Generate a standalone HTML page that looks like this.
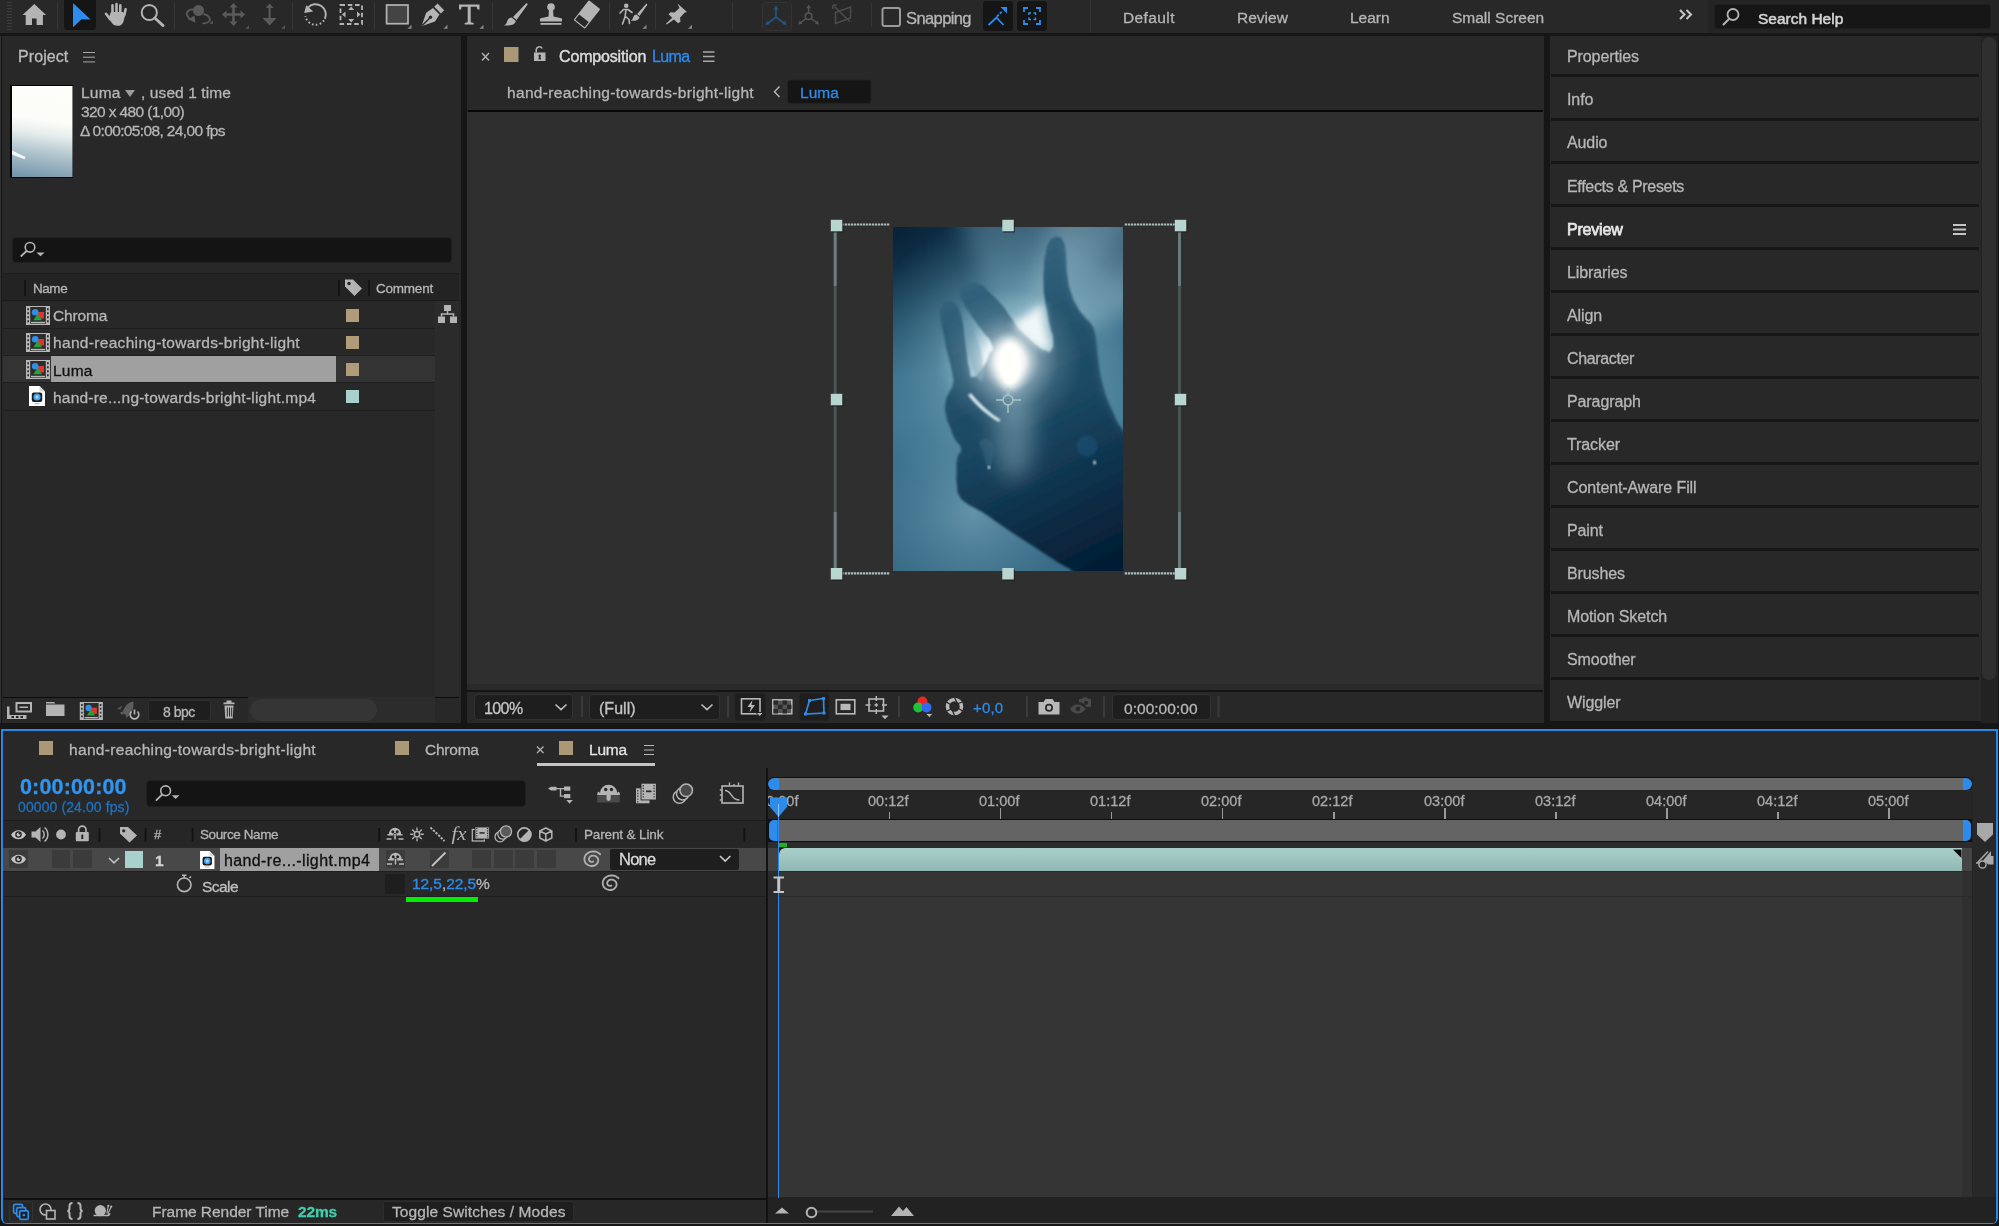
<!DOCTYPE html>
<html lang="en">
<head>
<meta charset="utf-8">
<title>After Effects - Luma</title>
<style>
*{box-sizing:border-box;margin:0;padding:0}
html,body{width:1999px;height:1226px;overflow:hidden;background:#161616}
body{position:relative;font-family:"Liberation Sans",sans-serif;color:#b6b6b6;font-size:15px}
.a{position:absolute}
.t{position:absolute;white-space:nowrap;line-height:20px;height:20px;color:#b6b6b6;font-size:15px;-webkit-text-stroke:.300px;will-change:transform;margin-top:1px}
.p{position:absolute;background:#282828}
.blue{color:#2d8ceb}
svg{position:absolute;overflow:visible}
</style>
</head>
<body>
<!-- TOOLBAR -->
<div class="p" id="toolbar" style="left:0;top:0;width:1999px;height:33px"></div>
<!--TB-->
<svg id="tbsvg" style="left:0;top:0" width="1999" height="33" viewBox="0 0 1999 33">
<g fill="none" stroke="#3b3b3b" stroke-width="1">
<path d="M7 2.5h5M7 5.5h5M7 8.5h5M7 11.5h5M7 14.5h5M7 17.5h5M7 20.5h5M7 23.5h5M7 26.5h5M7 29.5h5" stroke="#3d3d3d"/>
<path d="M57.5 2v28M174.5 2v28M292.5 2v28M374.5 2v28M492.5 2v28M609.5 2v28M655.5 2v28M732.5 2v28M871.5 3v24M1090.5 0v33" stroke="#353535"/>
</g>
<!-- home -->
<path fill="#b4b4b4" d="M34.3 4 22.5 15h3.2v10h6.3v-6.5h4.6V25h6.3V15h3.2z"/>
<!-- selection tool -->
<rect x="64" y="-2" width="32" height="32" rx="4" fill="#151515"/>
<path fill="#2d8ceb" d="M73 3 90.6 19.4 81.6 19.3 73 27.2z"/>
<!-- hand -->
<g fill="none" stroke="#b4b4b4" stroke-width="2.6" stroke-linecap="round">
<path d="M112.5 13.5V5.2M116.5 12.5V4M120.3 13V5.4M124.2 15.5l1.4-6.3"/>
<path d="M106 13.8l4.2 5.5"/>
</g>
<path fill="#b4b4b4" d="M111 12h11.5l2.8 2-1.5 6.5c-.6 3-2.6 5.3-6 5.300-3.300 0-5-1.300-6.300-3.300L108.500 18z"/>
<!-- zoom -->
<circle cx="149.300" cy="12.500" r="7.600" fill="none" stroke="#b4b4b4" stroke-width="2"/>
<path d="M154.800 18l8.300 7.600" stroke="#b4b4b4" stroke-width="2.800" stroke-linecap="round"/>
<!-- orbit (dim) -->
<g fill="#5a5a5a" stroke="none">
<circle cx="198.500" cy="10.500" r="5.500"/>
<path d="M188 19.200l7.500 3.500-1-7.200z"/>
<path d="M209.500 23.800 213 20.300v3.500zM245.500 28.800 249 25.300v3.500zM281.500 28.800 285 25.300v3.500z" />
</g>
<path d="M194 9.500c-5-1-8.500 2.500-6.500 6.500l2 3M203.500 14c5 1 8 4.500 5.500 7.500-1.500 1.600-4 2-6.500 1.800" fill="none" stroke="#5a5a5a" stroke-width="1.800"/>
<!-- pan 4-arrows (dim) -->
<g fill="#5a5a5a">
<path d="M232.200 6h2.600v17h-2.600zM225 13.200h17v2.600h-17z"/>
<path d="M233.500 3l4 4.500h-8zM233.500 26l4-4.500h-8zM222 14.500l4.500-4v8zM245 14.500l-4.500-4v8z"/>
<!-- dolly -->
<path d="M268.600 7h2v14h-2z"/>
<path d="M269.600 3.500l4 4.500h-8zM269.600 25.500l7-7.500h-14z"/>
</g>
<!-- rotate -->
<path d="M308.200 7.300A10.300 10.300 0 0 1 324.900 18.800" fill="none" stroke="#b4b4b4" stroke-width="1.900"/>
<path d="M306.300 5.300l6.900 6.200-9 1.600z" fill="#b4b4b4"/>
<path d="M324 20.400A10.300 10.300 0 0 1 305.400 16" fill="none" stroke="#b4b4b4" stroke-width="1.900" stroke-dasharray="1.700 2.200"/>
<!-- pan behind -->
<rect x="340.500" y="5" width="21.500" height="19" fill="none" stroke="#b4b4b4" stroke-width="1.800" stroke-dasharray="4.500 2.800"/>
<path fill="#b4b4b4" d="M351.200 6.500l3 3.500h-6zM351.200 22.500l3-3.500h-6zM342 14.500l3.500-3v6zM360.500 14.500l-3.500-3v6z"/>
<!-- rectangle -->
<rect x="386.600" y="5" width="21.400" height="18.700" fill="#444" stroke="#b4b4b4" stroke-width="1.700"/>
<g fill="#8a8a8a"><path d="M407.500 28.800 411.500 24.800v4zM443.500 28.800 447.500 24.800v4zM479.500 28.800 483.500 24.800v4zM642.500 28.800 646.500 24.800v4zM688 28.800 692 24.800v4z"/></g>
<!-- pen -->
<g fill="#b4b4b4">
<path d="M437.500 3.500l6.700 6.700-3.300 3.300-6.700-6.700z"/>
<path d="M433 8l6.500 6.500-4.500 7-13.500 4.700 4.700-13.500z"/>
</g>
<path d="M422 25.800l7.500-7.500" stroke="#282828" stroke-width="1.400"/>
<circle cx="430.500" cy="17.300" r="1.700" fill="#282828"/>
<!-- T -->
<path fill="#b4b4b4" d="M459 4.500h20.500v5h-2l-.8-2.700h-6v15.500l3 .7v1.500h-9v-1.500l3-.7V6.800h-6l-.8 2.700h-1.900z"/>
<!-- brush -->
<path fill="#b4b4b4" d="M526 3.500c1.200-.6 2 .3 1.300 1.500L516.500 20l-3.500-3z"/>
<path fill="#b4b4b4" d="M511.800 17.500l4 3.500c-.5 3.300-4.500 5-12 4.500 2.500-1 2.800-2.500 3.500-4.500.8-2.300 2.500-3.500 4.500-3.500z"/>
<!-- stamp -->
<g fill="#b4b4b4"><circle cx="551" cy="7" r="3.800"/><path d="M549 9h4l.5 7.500 5.500 1.200 3 .8v3h-22v-3l3-.8 5.500-1.200z"/><rect x="540.500" y="23" width="21" height="1.800"/></g>
<!-- eraser -->
<g transform="rotate(-52 587 14)"><rect x="574" y="7" width="25" height="14.500" rx="1" fill="#b4b4b4"/><rect x="575.200" y="8.200" width="6.500" height="12.100" fill="#282828"/></g>
<!-- roto brush -->
<g fill="#b4b4b4"><circle cx="626.200" cy="5.800" r="2.300"/>
<path d="M646 4c.8-.5 1.600.3 1 1.200L639.500 16l-2.300-2z"/>
<path d="M636.500 14.500l3 2.700c-.5 2.800-3.800 4-9 3.500 2-.8 2.200-2 2.700-3.500.6-1.800 1.800-2.700 3.300-2.700z"/></g>
<path d="M620 13l3.500-3.500h4.500l4 3M626 10l-1 7-2.500 7M625.500 16.500l3.500 3 .5 4" fill="none" stroke="#b4b4b4" stroke-width="1.600" stroke-linecap="round" stroke-linejoin="round"/>
<!-- pin -->
<g fill="#b4b4b4"><path d="M677.500 3.500l9.500 8.500-2.500.8-4.500 5 .5 4-2.500 1.500-9.500-9 2-2 4 .3 5-4.500z"/><path d="M672.500 17.500l1.800 1.800-7.500 5.200-.8-.8z"/></g>
<!-- 3d axis modes -->
<rect x="762.500" y="2.500" width="29" height="28" rx="3" fill="#2a2a2a" stroke="#333" />
<g stroke="#25568a" stroke-width="1.600" fill="#25568a"><path d="M776 17V8M776 17l-8.500 6.500M776 17l8.500 6.500" fill="none"/><path d="M776 5.500l2.500 4h-5zM765.500 25l1.500-4.300 2.800 3.600zM786.500 25l-1.500-4.300-2.800 3.600z" stroke="none"/></g>
<g stroke="#555" stroke-width="1.500" fill="#555"><circle cx="808.600" cy="16.300" r="3.300" fill="none"/><path d="M808.600 13V7M806 18.500l-6 4.500M811.200 18.500l6 4.500" fill="none"/><path d="M808.600 4.500l2.300 3.800h-4.600zM798.300 24.500l1.300-4 2.700 3.300zM819 24.500l-1.300-4-2.700 3.300z" stroke="none"/></g>
<g stroke="#4c4c4c" stroke-width="1.500" fill="none"><path d="M835.500 12.500l15-5.500v11l-15 5.500z"/><path d="M843 15l-8.500-8.500M843 15l7 6.500M832.800 5v4M832.800 5h4"/></g>
<!-- snapping -->
<rect x="882.500" y="8" width="17.500" height="18" rx="2" fill="none" stroke="#9a9a9a" stroke-width="2"/>
<rect x="983" y="1" width="30" height="30" rx="3" fill="#151515"/>
<rect x="1017" y="1" width="30" height="30" rx="3" fill="#151515"/>
<path d="M988.500 25l8-7.500 7 7.500" fill="none" stroke="#2d8ceb" stroke-width="1.800"/>
<path d="M997 16.500l5.500-5.500" fill="none" stroke="#2d8ceb" stroke-width="1.800" stroke-dasharray="2.500 1.500"/>
<path d="M1000.500 7h6.500v6.500z" fill="#2d8ceb"/>
<g fill="none" stroke="#2d8ceb" stroke-width="1.800"><path d="M1024 12V8h4M1036 8h4v4M1040 20v4h-4M1028 24h-4v-4"/><path d="M1029 15v-2h2M1033.500 13h2v2M1035.500 17.500v2h-2M1031 19.500h-2v-2" stroke-width="1.500"/></g>
<!-- chevrons -->
<path d="M1680 10l4.500 4.500-4.500 4.500M1686.500 10l4.500 4.500-4.500 4.500" fill="none" stroke="#c8c8c8" stroke-width="2"/>
<!-- search box -->
<rect x="1708" y="0" width="291" height="33" fill="#242424"/>
<rect x="1714.500" y="4.500" width="276" height="24" rx="3" fill="#161616" stroke="#1e1e1e"/>
<circle cx="1733" cy="14.500" r="5.500" fill="none" stroke="#b4b4b4" stroke-width="1.800"/>
<path d="M1729 19l-5.500 5.500" stroke="#b4b4b4" stroke-width="2" stroke-linecap="round"/>
</svg>
<div class="t" style="left:905.500px;top:7px;font-size:16.500px;letter-spacing:-.600px">Snapping</div>
<div class="t" style="left:1123px;top:7px;font-size:15.500px;letter-spacing:.400px">Default</div>
<div class="t" style="left:1237px;top:7px;font-size:15.500px">Review</div>
<div class="t" style="left:1350px;top:7px;font-size:15.500px">Learn</div>
<div class="t" style="left:1452px;top:7px;font-size:15.500px">Small Screen</div>
<div class="t" style="left:1758px;top:8px;font-size:15.500px;color:#d4d4d4;-webkit-text-stroke:.550px">Search Help</div>
<!--/TB-->
<!-- PROJECT PANEL -->
<div class="p" id="project" style="left:2px;top:36px;width:459px;height:687px"></div>
<!--PJ-->
<svg width="0" height="0" style="left:0;top:0"><defs>
<linearGradient id="thg" x1="0.100" y1="0" x2="0" y2="1"><stop offset="0" stop-color="#fdfdf9"/><stop offset=".330" stop-color="#fcfdf9"/><stop offset=".480" stop-color="#e6edec"/><stop offset=".700" stop-color="#aec3cc"/><stop offset="1" stop-color="#7193a8"/></linearGradient>
</defs></svg>
<div class="a" style="left:0;top:36px;width:1.400px;height:687px;background:#323232"></div>
<div class="t" style="left:17.800px;top:46px;font-size:16px;letter-spacing:.080px;color:#bcbcbc">Project</div>
<div class="a" style="left:83px;top:51.500px;width:12px;height:1.500px;background:#a8a8a8;box-shadow:0 4.700px 0 #a8a8a8,0 9.400px 0 #a8a8a8"></div>
<!-- thumbnail -->
<div class="a" style="left:10px;top:85px;width:63px;height:93px;background:#050505"></div>
<svg style="left:11.500px;top:86px" width="60.500" height="91" viewBox="0 0 60.500 91"><rect width="60.500" height="91" fill="url(#thg)"/><path d="M0 64.500l13.500 6.500-1 2.300L0 68.500z" fill="#f4f7f6"/></svg>
<div class="t" style="left:80.500px;top:82px;font-size:15.500px;letter-spacing:.200px">Luma</div>
<div class="a" style="left:125px;top:89.500px;width:0;height:0;border-left:5px solid transparent;border-right:5px solid transparent;border-top:7px solid #9c9c9c"></div>
<div class="t" style="left:140.500px;top:82px;font-size:15.500px;letter-spacing:.100px">, used 1 time</div>
<div class="t" style="left:80.500px;top:100.800px;font-size:15.500px;letter-spacing:-.620px">320 x 480 (1,00)</div>
<div class="t" style="left:80px;top:119.600px;font-size:15.500px;letter-spacing:-.630px">Δ 0:00:05:08, 24,00 fps</div>
<!-- search -->
<div class="a" style="left:11.500px;top:236.500px;width:440px;height:26px;background:#141414;border:1px solid #202020;border-radius:4px"></div>
<svg style="left:18px;top:239px" width="30" height="20" viewBox="18 239 30 20"><circle cx="30" cy="247.300" r="4.800" fill="none" stroke="#b4b4b4" stroke-width="1.600"/><path d="M26.600 251l-5.300 5" stroke="#b4b4b4" stroke-width="1.800" stroke-linecap="round"/><path d="M36.500 252.500h8l-4 3.800z" fill="#b4b4b4"/></svg>
<!-- list header -->
<div class="a" style="left:3px;top:273px;width:456px;height:28px;background:#232323;border-top:1px solid #1d1d1d;border-bottom:1px solid #1b1b1b"></div>
<div class="a" style="left:435px;top:301px;width:24px;height:397px;background:#2b2b2b"></div>
<div class="a" style="left:24px;top:280px;width:2px;height:16px;background:#141414"></div>
<div class="a" style="left:338px;top:280px;width:2px;height:16px;background:#141414"></div>
<div class="a" style="left:367.500px;top:280px;width:2px;height:16px;background:#141414"></div>
<div class="t" style="left:33px;top:277.500px;font-size:13.500px;letter-spacing:-.450px">Name</div>
<div class="t" style="left:376px;top:277.500px;font-size:13.500px;letter-spacing:-.220px">Comment</div>
<svg style="left:344px;top:278px" width="19" height="19" viewBox="0 0 19 19"><path d="M1 1.500h8l9 9-7.500 7.500-9.500-9.500z" fill="#b4b4b4"/><circle cx="5" cy="5.500" r="1.700" fill="#232323"/></svg>
<!-- rows -->
<div class="a" style="left:3px;top:327.500px;width:432px;height:1px;background:#1f1f1f"></div>
<div class="a" style="left:3px;top:354.800px;width:432px;height:1px;background:#1f1f1f"></div>
<div class="a" style="left:3px;top:355.500px;width:432px;height:27px;background:#333"></div>
<div class="a" style="left:50.500px;top:356px;width:285.500px;height:25.800px;background:#a0a0a0"></div>
<div class="a" style="left:3px;top:382.200px;width:432px;height:1px;background:#1f1f1f"></div>
<div class="a" style="left:3px;top:409.500px;width:432px;height:1px;background:#1f1f1f"></div>
<svg style="left:25.500px;top:305.500px" width="24" height="19" viewBox="0 0 24 19">
<rect x=".5" y=".5" width="23" height="18" fill="#2c2c2c" stroke="#b8b8b8"/>
<rect x="0" y="0" width="4.200" height="19" fill="#b8b8b8"/><rect x="19.800" y="0" width="4.200" height="19" fill="#b8b8b8"/>
<path d="M1.300 2.200h1.700v2h-1.700zM1.300 6.200h1.700v2h-1.700zM1.300 10.200h1.700v2h-1.700zM1.300 14.200h1.700v2h-1.700zM21 2.200h1.700v2H21zM21 6.200h1.700v2H21zM21 10.200h1.700v2H21zM21 14.200h1.700v2H21z" fill="#2c2c2c"/>
<rect x="5" y="15.800" width="14" height="1.600" fill="#b8b8b8"/>
<rect x="11" y="6" width="7" height="6.500" fill="#e0342c"/>
<circle cx="9.200" cy="6.300" r="3.300" fill="#2f8eea"/>
<path d="M11.700 7.500l4.300 6.800H7.400z" fill="#27a23a"/>
</svg>
<svg style="left:25.500px;top:332.800px" width="24" height="19" viewBox="0 0 24 19">
<rect x=".5" y=".5" width="23" height="18" fill="#2c2c2c" stroke="#b8b8b8"/>
<rect x="0" y="0" width="4.200" height="19" fill="#b8b8b8"/><rect x="19.800" y="0" width="4.200" height="19" fill="#b8b8b8"/>
<path d="M1.300 2.200h1.700v2h-1.700zM1.300 6.200h1.700v2h-1.700zM1.300 10.200h1.700v2h-1.700zM1.300 14.200h1.700v2h-1.700zM21 2.200h1.700v2H21zM21 6.200h1.700v2H21zM21 10.200h1.700v2H21zM21 14.200h1.700v2H21z" fill="#2c2c2c"/>
<rect x="5" y="15.800" width="14" height="1.600" fill="#b8b8b8"/>
<rect x="11" y="6" width="7" height="6.500" fill="#e0342c"/>
<circle cx="9.200" cy="6.300" r="3.300" fill="#2f8eea"/>
<path d="M11.700 7.500l4.300 6.800H7.400z" fill="#27a23a"/>
</svg>
<svg style="left:25.500px;top:360px" width="24" height="19" viewBox="0 0 24 19">
<rect x=".5" y=".5" width="23" height="18" fill="#2c2c2c" stroke="#b8b8b8"/>
<rect x="0" y="0" width="4.200" height="19" fill="#b8b8b8"/><rect x="19.800" y="0" width="4.200" height="19" fill="#b8b8b8"/>
<path d="M1.300 2.200h1.700v2h-1.700zM1.300 6.200h1.700v2h-1.700zM1.300 10.200h1.700v2h-1.700zM1.300 14.200h1.700v2h-1.700zM21 2.200h1.700v2H21zM21 6.200h1.700v2H21zM21 10.200h1.700v2H21zM21 14.200h1.700v2H21z" fill="#2c2c2c"/>
<rect x="5" y="15.800" width="14" height="1.600" fill="#b8b8b8"/>
<rect x="11" y="6" width="7" height="6.500" fill="#e0342c"/>
<circle cx="9.200" cy="6.300" r="3.300" fill="#2f8eea"/>
<path d="M11.700 7.500l4.300 6.800H7.400z" fill="#27a23a"/>
</svg>
<svg style="left:29px;top:386px" width="16" height="20" viewBox="0 0 16 20">
<path d="M0 0h10.500L16 5.500V20H0z" fill="#fff"/><path d="M10.500 0v5.500H16z" fill="#d8d8d8"/>
<rect x="2.800" y="6.500" width="10.400" height="9.500" rx="2" fill="#1b1b1b"/><circle cx="8" cy="11" r="3.600" fill="#3da0f0"/><circle cx="8" cy="11" r="1.700" fill="#9fd0ff"/>
<rect x="5.500" y="17.400" width="5" height=".8" fill="#999"/>
</svg>
<div class="t" style="left:52.500px;top:305.200px;font-size:15.500px;letter-spacing:-.140px">Chroma</div>
<div class="t" style="left:52.500px;top:332.400px;font-size:15.500px;letter-spacing:.320px">hand-reaching-towards-bright-light</div>
<div class="t" style="left:52.500px;top:359.700px;font-size:15.500px;letter-spacing:.200px;color:#111">Luma</div>
<div class="t" style="left:52.500px;top:386.900px;font-size:15.500px;letter-spacing:.220px">hand-re...ng-towards-bright-light.mp4</div>
<div class="a" style="left:346px;top:308.500px;width:13px;height:13px;background:#b09c7a"></div>
<div class="a" style="left:346px;top:335.800px;width:13px;height:13px;background:#b09c7a"></div>
<div class="a" style="left:346px;top:363px;width:13px;height:13px;background:#b09c7a"></div>
<div class="a" style="left:346px;top:390.300px;width:13px;height:13px;background:#a8d0cc"></div>
<svg style="left:437.500px;top:305px" width="19" height="18" viewBox="0 0 19 18"><g fill="#b4b4b4"><rect x="6" y="0" width="7" height="6"/><rect x="0" y="11.500" width="7" height="6.500"/><rect x="12" y="11.500" width="7" height="6.500"/></g><path d="M9.500 6v3M3.500 11.500V9h12v2.500" fill="none" stroke="#b4b4b4" stroke-width="1.500"/></svg>
<!-- bottom bar -->
<div class="a" style="left:3px;top:697px;width:456px;height:1px;background:#0c0c0c"></div>
<div class="a" style="left:248px;top:697px;width:187px;height:25px;background:#2c2c2c"></div>
<div class="a" style="left:249.500px;top:699px;width:127px;height:21.500px;background:#353535;border-radius:11px"></div>
<div class="a" style="left:147.500px;top:700px;width:63.500px;height:21px;background:#1e1e1e;border:1px solid #2f2f2f;border-radius:3px"></div>
<div class="t" style="left:163px;top:700.500px;font-size:14px;letter-spacing:-.500px">8 bpc</div>
<svg style="left:0;top:698px" width="260" height="25" viewBox="0 698 260 25">
<g fill="#b4b4b4">
<path d="M15.500 702h16.500v10.500H15.500zM7 706.500h2.500v12.500H7zM9.500 715h17v4h-17z"/>
<path d="M46 702h8l1.500 1.500H46zM46 704.500h18.500v11.500H46z"/>
<rect x="116" y="0" width="0" height="0"/>
<path d="M223.500 702.500h11v1.800h-11zM226.500 700.500h5v2h-5zM224.500 705.500h9l-.8 13h-7.400z"/>
</g>
<path d="M17.500 704h12.500v6.500H17.500z" fill="#282828"/><path d="M19.500 706.500h8.500v1.500h-8.500z" fill="#b4b4b4"/>
<path d="M11.500 716h2.500v2h-2.500zM16 716h2.500v2H16zM20.500 716h2.500v2h-2.500z" fill="#282828"/>
<path d="M227.300 707.500v9M229.500 707.500v9M231.700 707.500v9" stroke="#282828" stroke-width="1"/>
<g fill="#5c5c5c"><path d="M133.500 701.500c-5 .5-9 4.500-10.500 10l-3 1 1.500 2 3.500-.5 1 2.500c5-1.500 8-6 7.500-15z"/><path d="M117 709l5-3.500-1.500 4zM126 718.500l1-4.500 2.500 1z"/></g>
<path d="M131.500 711.500a4.300 4.300 0 1 0 6 0M134.500 709.500v5" fill="none" stroke="#b4b4b4" stroke-width="1.600"/>
</svg>
<svg style="left:79px;top:701.500px" width="24.500" height="18" viewBox="0 0 24 19">
<rect x=".5" y=".5" width="23" height="18" fill="#2c2c2c" stroke="#b8b8b8"/>
<rect x="0" y="0" width="4.200" height="19" fill="#b8b8b8"/><rect x="19.800" y="0" width="4.200" height="19" fill="#b8b8b8"/>
<path d="M1.300 2.200h1.700v2h-1.700zM1.300 6.200h1.700v2h-1.700zM1.300 10.200h1.700v2h-1.700zM1.300 14.200h1.700v2h-1.700zM21 2.200h1.700v2H21zM21 6.200h1.700v2H21zM21 10.200h1.700v2H21zM21 14.200h1.700v2H21z" fill="#2c2c2c"/>
<rect x="5" y="15.800" width="14" height="1.600" fill="#b8b8b8"/>
<rect x="11" y="6" width="7" height="6.500" fill="#e0342c"/>
<circle cx="9.200" cy="6.300" r="3.300" fill="#2f8eea"/>
<path d="M11.700 7.500l4.300 6.800H7.400z" fill="#27a23a"/>
</svg>
<!--/PJ-->
<!-- COMP PANEL -->
<div class="p" id="comp" style="left:466.500px;top:36px;width:1077.500px;height:687px"></div>
<!--CP-->
<!-- comp header -->
<svg style="left:467px;top:36px" width="1076" height="76" viewBox="467 36 1076 76">
<path d="M482 53l7 7.500M489 53l-7 7.500" stroke="#b0b0b0" stroke-width="1.400"/>
<rect x="504" y="47" width="14.500" height="15" fill="#ab9877"/>
<rect x="534" y="52.500" width="11.500" height="8.500" fill="#b4b4b4"/>
<path d="M536.200 52.500v-2.500a3.200 3.200 0 0 1 6-1.500" fill="none" stroke="#b4b4b4" stroke-width="1.500"/>
<path d="M539.700 54.500a1.300 1.300 0 0 1 .8 2.300l.5 2.700h-2.600l.5-2.700a1.300 1.300 0 0 1 .8-2.300z" fill="#282828"/>
<path d="M703 52h11.500M703 56.600h11.500M703 61.200h11.500" stroke="#a8a8a8" stroke-width="1.500"/>
<path d="M779.500 86.500l-5 5.200 5 5.200" fill="none" stroke="#b4b4b4" stroke-width="1.500"/>
<rect x="787.500" y="80" width="83.500" height="23.500" rx="2.500" fill="#151515" stroke="#222"/>
</svg>
<div class="t" style="left:558.500px;top:46px;font-size:16px;letter-spacing:-.160px;color:#dcdcdc;-webkit-text-stroke:.450px">Composition</div>
<div class="t" style="left:652px;top:46px;font-size:16px;letter-spacing:-.600px;color:#2d8ceb">Luma</div>
<div class="t" style="left:507px;top:81.500px;font-size:15.500px;letter-spacing:.320px">hand-reaching-towards-bright-light</div>
<div class="t" style="left:800px;top:81.800px;font-size:15.500px;letter-spacing:.050px;color:#2d8ceb">Luma</div>
<div class="a" style="left:467.500px;top:110px;width:1075.500px;height:2px;background:#080808"></div>
<!-- viewer -->
<div class="a" id="viewer" style="left:467px;top:112px;width:1076.200px;height:572.200px;background:#2f2f2f"></div>
<div class="a" style="left:467px;top:684.200px;width:1076px;height:6px;background:#2a2a2a"></div>
<div class="a" style="left:467px;top:690px;width:1075.500px;height:1.800px;background:#141414"></div>
<!--IMG-->
<svg id="handimg" style="left:892.500px;top:226.700px;overflow:hidden" width="230" height="344" viewBox="0 0 230 344">
<defs>
<linearGradient id="bgv" x1="0" y1="0" x2="0" y2="1"><stop offset="0" stop-color="#103650"/><stop offset=".250" stop-color="#2a607c"/><stop offset=".550" stop-color="#3c738e"/><stop offset="1" stop-color="#386b86"/></linearGradient>
<radialGradient id="tl" cx="0" cy="0" r="150" gradientUnits="userSpaceOnUse"><stop offset="0" stop-color="#071f33" stop-opacity=".900"/><stop offset=".500" stop-color="#0a2a40" stop-opacity=".550"/><stop offset="1" stop-color="#0a2a40" stop-opacity="0"/></radialGradient>
<radialGradient id="glow" cx="117" cy="136" r="150" gradientUnits="userSpaceOnUse"><stop offset="0" stop-color="#fff"/><stop offset=".100" stop-color="#fff"/><stop offset=".170" stop-color="#eef7f9" stop-opacity=".950"/><stop offset=".230" stop-color="#bcd9e4" stop-opacity=".820"/><stop offset=".330" stop-color="#90bccd" stop-opacity=".660"/><stop offset=".500" stop-color="#7aaabd" stop-opacity=".450"/><stop offset=".750" stop-color="#6fa3b8" stop-opacity=".200"/><stop offset="1" stop-color="#6fa3b8" stop-opacity="0"/></radialGradient>
<radialGradient id="ll" cx="80" cy="285" r="95" gradientUnits="userSpaceOnUse"><stop offset="0" stop-color="#7fabbf" stop-opacity=".600"/><stop offset=".600" stop-color="#6d9db3" stop-opacity=".250"/><stop offset="1" stop-color="#6d9db3" stop-opacity="0"/></radialGradient>
<radialGradient id="glow2" cx="117" cy="134" r="72" gradientUnits="userSpaceOnUse"><stop offset="0" stop-color="#fff"/><stop offset=".200" stop-color="#fff" stop-opacity=".880"/><stop offset=".420" stop-color="#e4f2f6" stop-opacity=".420"/><stop offset=".680" stop-color="#c4dde7" stop-opacity=".150"/><stop offset="1" stop-color="#bcd9e4" stop-opacity="0"/></radialGradient>
<linearGradient id="handg" x1="60" y1="20" x2="215" y2="330" gradientUnits="userSpaceOnUse"><stop offset="0" stop-color="#3d6d86"/><stop offset=".180" stop-color="#2e5e78"/><stop offset=".400" stop-color="#22506a"/><stop offset=".600" stop-color="#18435e"/><stop offset=".820" stop-color="#0b2d46"/><stop offset="1" stop-color="#051f35"/></linearGradient>
<linearGradient id="beam" x1="125" y1="125" x2="215" y2="0" gradientUnits="userSpaceOnUse"><stop offset="0" stop-color="#fff" stop-opacity=".900"/><stop offset=".450" stop-color="#d8e9ee" stop-opacity=".550"/><stop offset="1" stop-color="#a9c8d4" stop-opacity=".350"/></linearGradient>
<filter id="b2" x="-20%" y="-20%" width="140%" height="140%"><feGaussianBlur stdDeviation="1.300"/></filter>
<filter id="b4" x="-30%" y="-30%" width="160%" height="160%"><feGaussianBlur stdDeviation="4.500"/></filter>
<filter id="b10" x="-150%" y="-100%" width="400%" height="300%"><feGaussianBlur stdDeviation="11"/></filter>
<filter id="b1" x="-20%" y="-20%" width="140%" height="140%"><feGaussianBlur stdDeviation=".800"/></filter>
</defs>
<rect width="230" height="344" fill="url(#bgv)"/>
<rect width="230" height="344" fill="url(#tl)"/>
<path d="M112 140L165 -20h90v95z" fill="url(#beam)" filter="url(#b10)" opacity=".850"/>
<path d="M117 130L60 -30h200z" fill="#8fb8ca" opacity=".330" filter="url(#b10)"/>
<rect width="230" height="344" fill="url(#glow)"/>
<rect width="230" height="344" fill="url(#ll)"/>
<path d="M54.0 74.0C58.0 73.3 57.0 73.0 61.0 76.0C65.0 79.0 63.0 76.3 66.0 83.0C69.0 89.7 68.0 87.0 70.0 96.0C72.0 105.0 70.7 100.3 72.0 110.0C73.3 119.7 72.7 115.0 74.0 125.0C75.3 135.0 74.0 131.7 76.0 140.0C78.0 148.3 75.3 150.0 80.0 150.0C84.7 150.0 84.7 147.3 90.0 140.0C95.3 132.7 93.0 135.3 96.0 128.0C99.0 120.7 101.7 126.7 99.0 118.0C96.3 109.3 95.0 112.0 88.0 102.0C81.0 92.0 84.0 97.0 78.0 88.0C72.0 79.0 73.7 82.3 70.0 75.0C66.3 67.7 67.0 71.3 67.0 66.0C67.0 60.7 67.0 62.2 70.0 59.0C73.0 55.8 70.3 57.0 76.0 56.5C81.7 56.0 80.0 54.3 87.0 57.5C94.0 60.7 90.0 59.5 97.0 66.0C104.0 72.5 101.3 69.3 108.0 77.0C114.7 84.7 111.0 81.0 117.0 89.0C123.0 97.0 120.0 94.0 126.0 101.0C132.0 108.0 129.0 104.3 135.0 110.0C141.0 115.7 138.3 113.7 144.0 118.0C149.7 122.3 147.3 121.3 152.0 123.0C156.7 124.7 155.3 126.7 158.0 123.0C160.7 119.3 160.3 119.7 160.0 112.0C159.7 104.3 159.0 109.0 157.0 100.0C155.0 91.0 155.8 95.0 154.0 85.0C152.2 75.0 152.7 80.0 151.5 70.0C150.3 60.0 150.7 65.0 150.5 55.0C150.3 45.0 150.3 49.3 151.0 40.0C151.7 30.7 150.8 35.3 152.5 27.0C154.2 18.7 153.2 20.5 156.0 15.0C158.8 9.5 157.7 12.2 161.0 10.5C164.3 8.8 163.0 8.8 166.0 10.0C169.0 11.2 167.8 9.7 170.0 14.0C172.2 18.3 171.3 15.7 172.5 23.0C173.7 30.3 172.8 27.3 173.5 36.0C174.2 44.7 173.0 39.3 174.5 49.0C176.0 58.7 174.8 55.0 178.0 65.0C181.2 75.0 179.7 71.0 184.0 79.0C188.3 87.0 186.2 82.8 191.0 89.0C195.8 95.2 194.8 91.8 198.5 97.5C202.2 103.2 200.3 99.8 202.0 106.0C203.7 112.2 202.5 108.0 203.5 116.0C204.5 124.0 203.8 120.3 205.0 130.0C206.2 139.7 205.3 135.7 207.0 145.0C208.7 154.3 207.7 149.3 210.0 158.0C212.3 166.7 210.7 162.0 214.0 171.0C217.3 180.0 216.3 176.7 220.0 185.0C223.7 193.3 221.0 188.3 225.0 196.0C229.0 203.7 227.0 196.7 232.0 208.0C237.0 219.3 237.3 199.3 240.0 230.0C242.7 260.7 240.0 256.7 240.0 300.0C240.0 343.3 253.3 340.0 240.0 360.0C226.7 380.0 219.7 365.0 200.0 360.0C180.3 355.0 191.7 352.7 181.0 345.0C170.3 337.3 176.3 342.2 168.0 337.0C159.7 331.8 165.3 335.5 156.0 329.5C146.7 323.5 151.0 326.2 140.0 319.0C129.0 311.8 133.7 315.0 123.0 308.0C112.3 301.0 118.0 304.8 108.0 298.0C98.0 291.2 101.7 293.2 93.0 287.5C84.3 281.8 89.0 285.2 82.0 281.0C75.0 276.8 77.3 279.3 72.0 275.0C66.7 270.7 68.7 273.3 66.0 268.0C63.3 262.7 64.8 266.7 64.0 259.0C63.2 251.3 63.3 254.3 63.5 245.0C63.7 235.7 63.0 238.7 64.5 231.0C66.0 223.3 68.8 228.3 68.0 222.0C67.2 215.7 65.7 219.3 62.0 212.0C58.3 204.7 60.0 208.0 57.0 200.0C54.0 192.0 54.5 196.0 53.0 188.0C51.5 180.0 51.5 183.3 52.5 176.0C53.5 168.7 53.5 172.3 56.0 166.0C58.5 159.7 58.8 163.0 60.0 157.0C61.2 151.0 60.3 154.3 59.5 148.0C58.7 141.7 59.3 146.0 57.5 138.0C55.7 130.0 56.2 133.7 54.0 124.0C51.8 114.3 53.0 118.7 51.0 109.0C49.0 99.3 49.3 103.0 48.0 95.0C46.7 87.0 46.7 90.7 47.0 85.0C47.3 79.3 46.7 81.7 49.0 78.0C51.3 74.3 50.0 74.7 54.0 74.0z" fill="url(#handg)" filter="url(#b2)"/>
<path d="M166 12c4 3 5 10 5.500 20l1.500 20c1.500 12 5 22 11 30l14 17c3 5 4 11 4.500 18l4 38c3 13 9 26 16 38l8 14V60z" fill="#6d9cb2" opacity=".220" filter="url(#b4)"/>
<ellipse cx="81" cy="124" rx="6.500" ry="31" transform="rotate(-14 81 124)" fill="#5f8da4" opacity=".600" filter="url(#b2)"/>
<rect width="230" height="344" fill="url(#glow2)"/>
<ellipse cx="121" cy="205" rx="20" ry="48" fill="#b5d2de" opacity=".380" filter="url(#b10)"/>
<path d="M120 100l26 20 11 3c-4-12-6-26-7-46-10 5-21 13-30 23z" fill="#f8fcfc" opacity=".900" filter="url(#b4)"/>
<ellipse cx="117" cy="137" rx="14" ry="26" fill="#fffffb" filter="url(#b4)"/>
<ellipse cx="117" cy="137" rx="10.500" ry="20" fill="#fffffb" filter="url(#b2)"/>
<path d="M75 168c8 10.500 19 20.500 31 27l1.500-2.200c-11-7-21-16-29.500-26.500z" fill="#e8f4f7" filter="url(#b1)" opacity=".900"/>
<path d="M86 215c5-5 12-4 14 2 1.500 6 .5 14-2.500 21l-3.500 2c-2-9-4-17-8-25z" fill="#3b6b85" opacity=".450" filter="url(#b2)"/>
<circle cx="96" cy="240.500" r="1.400" fill="#dfeef2" filter="url(#b1)"/>
<circle cx="194" cy="219" r="10.500" fill="#1c5a86" opacity=".420" filter="url(#b2)"/>
<ellipse cx="201.600" cy="235.500" rx="1.200" ry="2" fill="#e8f2f5" filter="url(#b1)"/>
</svg>
<!-- bounding box -->
<svg style="left:820px;top:210px" width="380" height="380" viewBox="820 210 380 380">
<g fill="none">
<path d="M835.200 231v337M1179.500 231v337" stroke="#4b5554" stroke-width="2.900"/>
<path d="M835.200 231v55M835.200 512v56M1179.500 231v55M1179.500 512v56" stroke="#6b7c7a" stroke-width="2.900"/>
<path d="M842 224.500h48M1124.700 224.500h50M842 573.300h48M1124.700 573.300h50" stroke="#a9bdba" stroke-width="2.200" stroke-dasharray="2.300 .700"/>
</g>
<g fill="#1c1c1c" opacity=".800">
<rect x="832" y="221" width="11.500" height="11.500"/><rect x="1003.300" y="221" width="11.500" height="11.500"/><rect x="1176" y="221" width="11.500" height="11.500"/>
<rect x="832" y="395" width="11.500" height="11.500"/><rect x="1176" y="395" width="11.500" height="11.500"/>
<rect x="832" y="569.200" width="11.500" height="11.500"/><rect x="1003.300" y="569.200" width="11.500" height="11.500"/><rect x="1176" y="569.200" width="11.500" height="11.500"/>
</g>
<g fill="#b7d6d1">
<rect x="830.800" y="219.800" width="11.500" height="11.500"/><rect x="1002.300" y="219.800" width="11.500" height="11.500"/><rect x="1174.800" y="219.800" width="11.500" height="11.500"/>
<rect x="830.800" y="393.800" width="11.500" height="11.500"/><rect x="1174.800" y="393.800" width="11.500" height="11.500"/>
<rect x="830.800" y="568" width="11.500" height="11.500"/><rect x="1002.300" y="568" width="11.500" height="11.500"/><rect x="1174.800" y="568" width="11.500" height="11.500"/>
</g>
<!-- anchor -->
<g fill="none" stroke="#a9c9c6" stroke-width="1.400"><circle cx="1008" cy="400" r="5"/><path d="M1008 388v7M1008 405v8M996 400h7M1013 400h8"/></g>
<circle cx="1008" cy="400" r="1" fill="#5d7c80"/>
</svg>
<!--/IMG-->
<!-- comp bottom bar -->
<div class="a" style="left:474px;top:694px;width:99px;height:25.500px;background:#1e1e1e;border:1px solid #323232;border-radius:4px"></div>
<div class="a" style="left:589px;top:694px;width:130.500px;height:25.500px;background:#1e1e1e;border:1px solid #323232;border-radius:4px"></div>
<div class="a" style="left:1111.500px;top:694px;width:99px;height:25.500px;background:#1e1e1e;border:1px solid #323232;border-radius:4px"></div>
<div class="t" style="left:483.500px;top:698px;font-size:16px;letter-spacing:-.600px;color:#c4c4c4">100%</div>
<div class="t" style="left:598.500px;top:698px;font-size:16px;letter-spacing:.040px;color:#c4c4c4">(Full)</div>
<div class="t" style="left:973px;top:696.500px;font-size:15px;letter-spacing:.170px;color:#2d8ceb">+0,0</div>
<div class="t" style="left:1124px;top:697.500px;font-size:15.500px;letter-spacing:.030px">0:00:00:00</div>
<svg style="left:467px;top:692px" width="1076" height="31" viewBox="467 692 1076 31">
<g fill="none" stroke="#b8b8b8" stroke-width="1.700"><path d="M555.500 704.500l5.500 5.200 5.500-5.200M701.500 704.500l5.500 5.200 5.500-5.200"/></g>
<g stroke="#3a3a3a" stroke-width="2"><path d="M582 696v21M728 696v21M899 696v21M1027 696v21M1104 696v21M1218.500 696v21"/></g>
<!-- fast preview -->
<rect x="735" y="693.500" width="30.500" height="27" rx="3" fill="#1e1e1e"/>
<rect x="741.500" y="698.800" width="18.500" height="15" fill="none" stroke="#b8b8b8" stroke-width="1.600"/>
<path d="M752.500 700l-5 7h3.500l-1.500 5.500 5.500-7.500h-3.500z" fill="#b8b8b8"/>
<path d="M756 712.500h7.500l-3.700 4z" fill="#b8b8b8" stroke="#1e1e1e" stroke-width="1"/>
<!-- checker -->
<rect x="772.800" y="699.800" width="19" height="14" fill="#555" stroke="#b8b8b8" stroke-width="1.500"/>
<path d="M773.500 700.500h4.500v4.300h-4.500zM782.500 700.500h4.500v4.300h-4.500zM778 704.800h4.500v4.300H778zM787 704.800h4.500v4.300H787zM773.500 709.100h4.500v4.300h-4.500zM782.500 709.100h4.500v4.300h-4.500z" fill="#2a2a2a"/>
<!-- mask toggle -->
<rect x="799.500" y="693.500" width="29.500" height="27" rx="3" fill="#1e1e1e"/>
<path d="M809.500 700.500l14-2 .5 14.500-18.500 1z" fill="none" stroke="#2d8ceb" stroke-width="1.700"/>
<g fill="#2d8ceb"><rect x="808" y="699" width="3" height="3"/><rect x="822" y="697" width="3" height="3"/><rect x="822.500" y="711.500" width="3" height="3"/><rect x="804" y="712.500" width="3" height="3"/></g>
<!-- region of interest -->
<rect x="836.300" y="699.800" width="18.500" height="14" fill="none" stroke="#b8b8b8" stroke-width="1.600"/>
<rect x="840.500" y="703.800" width="10" height="6.300" fill="#b8b8b8"/>
<!-- grid -->
<rect x="869" y="699" width="14.500" height="12" fill="none" stroke="#b8b8b8" stroke-width="1.600"/>
<path d="M876.300 696v5M876.300 709v5M865.500 705h5M882 705h5M874.500 705h3.500M876.300 703.200v3.500" stroke="#b8b8b8" stroke-width="1.500"/>
<path d="M881.500 715.500h7l-3.500 3.800z" fill="#b8b8b8"/>
<!-- rgb -->
<circle cx="922.500" cy="701.500" r="5" fill="#f4231f"/><circle cx="918.200" cy="707.500" r="5" fill="#1fc23a"/><circle cx="926.500" cy="707.500" r="5" fill="#2d6cf0"/>
<path d="M925.500 713.500h7.500l-3.700 4z" fill="#b8b8b8" stroke="#282828" stroke-width=".800"/>
<!-- aperture -->
<circle cx="954.500" cy="706.500" r="7" fill="none" stroke="#b8b8b8" stroke-width="3.600"/>
<g stroke="#282828" stroke-width="1.300"><path d="M954.500 697.500l3 6M962.500 702l-6 2M962.500 711l-5.500-3.500M954.500 715.500l-2.500-6M946.500 711l6-2.300M946.500 702l5.500 3.500"/></g>
<!-- camera -->
<path d="M1038.500 702h5l2-3h7l2 3h5v12.500h-21z" fill="#b8b8b8"/><circle cx="1049" cy="707.800" r="4" fill="#282828"/><circle cx="1049" cy="707.800" r="2.300" fill="#b8b8b8"/>
<!-- show snapshot (dim) -->
<g fill="#4a4a4a"><path d="M1070 709c3-5 10-7 16 0-6 7-13 5-16 0z"/><path d="M1079 699h3l1-1.500h4l1 1.500h3v8h-4.500c-1.500-3-4-4.500-7.500-5z"/></g>
<circle cx="1078" cy="709" r="2.300" fill="#282828"/><circle cx="1086" cy="702.800" r="2" fill="#282828"/>
</svg>
<!--/CP-->
<!-- RIGHT PANELS -->
<div class="a" id="right" style="left:1551px;top:36px;width:448px;height:687px"></div>
<!--RT-->
<div class="p" style="left:1550px;top:36px;width:431px;height:684.500px"></div>
<div class="a" style="left:1981px;top:36px;width:16.500px;height:687px;background:#222"></div>
<div class="a" style="left:1981.500px;top:37px;width:14.500px;height:643px;background:#2f2f2f;border-radius:7px"></div>
<div class="a" style="left:1551px;top:74.4px;width:427.700px;height:3px;background:#171717"></div>
<div class="t" style="left:1566.500px;top:46.3px;font-size:16px;letter-spacing:-0.1px">Properties</div>
<div class="a" style="left:1551px;top:117.5px;width:427.700px;height:3px;background:#171717"></div>
<div class="t" style="left:1566.500px;top:89.4px;font-size:16px;letter-spacing:-0.1px">Info</div>
<div class="a" style="left:1551px;top:160.5px;width:427.700px;height:3px;background:#171717"></div>
<div class="t" style="left:1566.500px;top:132.4px;font-size:16px;letter-spacing:-0.1px">Audio</div>
<div class="a" style="left:1551px;top:203.6px;width:427.700px;height:3px;background:#171717"></div>
<div class="t" style="left:1566.500px;top:175.5px;font-size:16px;letter-spacing:-0.32px">Effects &amp; Presets</div>
<div class="a" style="left:1551px;top:246.6px;width:427.700px;height:3px;background:#171717"></div>
<div class="t" style="left:1566.500px;top:218.5px;font-size:16px;letter-spacing:-0.2px;color:#e6e6e6;-webkit-text-stroke:.750px">Preview</div>
<div class="a" style="left:1551px;top:289.7px;width:427.700px;height:3px;background:#171717"></div>
<div class="t" style="left:1566.500px;top:261.6px;font-size:16px;letter-spacing:-0.1px">Libraries</div>
<div class="a" style="left:1551px;top:332.8px;width:427.700px;height:3px;background:#171717"></div>
<div class="t" style="left:1566.500px;top:304.7px;font-size:16px;letter-spacing:-0.1px">Align</div>
<div class="a" style="left:1551px;top:375.8px;width:427.700px;height:3px;background:#171717"></div>
<div class="t" style="left:1566.500px;top:347.7px;font-size:16px;letter-spacing:-0.36px">Character</div>
<div class="a" style="left:1551px;top:418.9px;width:427.700px;height:3px;background:#171717"></div>
<div class="t" style="left:1566.500px;top:390.8px;font-size:16px;letter-spacing:-0.1px">Paragraph</div>
<div class="a" style="left:1551px;top:461.9px;width:427.700px;height:3px;background:#171717"></div>
<div class="t" style="left:1566.500px;top:433.8px;font-size:16px;letter-spacing:-0.1px">Tracker</div>
<div class="a" style="left:1551px;top:505.0px;width:427.700px;height:3px;background:#171717"></div>
<div class="t" style="left:1566.500px;top:476.9px;font-size:16px;letter-spacing:-0.1px">Content-Aware Fill</div>
<div class="a" style="left:1551px;top:548.1px;width:427.700px;height:3px;background:#171717"></div>
<div class="t" style="left:1566.500px;top:520.0px;font-size:16px;letter-spacing:-0.1px">Paint</div>
<div class="a" style="left:1551px;top:591.1px;width:427.700px;height:3px;background:#171717"></div>
<div class="t" style="left:1566.500px;top:563.0px;font-size:16px;letter-spacing:-0.1px">Brushes</div>
<div class="a" style="left:1551px;top:634.2px;width:427.700px;height:3px;background:#171717"></div>
<div class="t" style="left:1566.500px;top:606.1px;font-size:16px;letter-spacing:-0.1px">Motion Sketch</div>
<div class="a" style="left:1551px;top:677.2px;width:427.700px;height:3px;background:#171717"></div>
<div class="t" style="left:1566.500px;top:649.1px;font-size:16px;letter-spacing:-0.1px">Smoother</div>
<div class="t" style="left:1566.500px;top:692.2px;font-size:16px;letter-spacing:-0.1px">Wiggler</div>
<div class="a" style="left:1953px;top:223.500px;width:12.500px;height:2px;background:#c4c4c4;box-shadow:0 4.500px 0 #c4c4c4,0 9px 0 #c4c4c4"></div>
<!--/RT-->
<!-- TIMELINE -->
<div class="a" id="timelineb" style="left:1.300px;top:729px;width:1996.600px;height:495px;background:#2d86e0;border-radius:0 0 6px 6px"></div>
<div class="p" id="timeline" style="left:3.100px;top:730.500px;width:1992.700px;height:492px;border-radius:0 0 4px 4px"></div>
<!--TL-->
<!-- timeline tabs -->
<div class="a" style="left:39px;top:741px;width:14px;height:14px;background:#ab9877"></div>
<div class="t" style="left:69px;top:738.500px;font-size:15.500px;letter-spacing:.320px">hand-reaching-towards-bright-light</div>
<div class="a" style="left:395px;top:741px;width:14px;height:14px;background:#ab9877"></div>
<div class="t" style="left:425px;top:738.500px;font-size:15.500px;letter-spacing:-.240px">Chroma</div>
<div class="a" style="left:559px;top:741px;width:14px;height:14px;background:#ab9877"></div>
<div class="t" style="left:589px;top:738.500px;font-size:15.500px;letter-spacing:-.200px;color:#e4e4e4">Luma</div>
<div class="a" style="left:537px;top:763px;width:117.500px;height:2.600px;background:#c4c4c4"></div>
<div class="a" style="left:644px;top:744.500px;width:10px;height:1.500px;background:#b8b8b8;box-shadow:0 4.500px 0 #b8b8b8,0 9px 0 #b8b8b8"></div>
<!-- timecode -->
<div class="t" style="left:19.500px;top:773.500px;height:24px;line-height:24px;font-size:21.500px;font-weight:700;letter-spacing:.150px;color:#2f95f0">0:00:00:00</div>
<div class="t" style="left:17.500px;top:796px;font-size:14px;letter-spacing:.100px;color:#1d72c2">00000 (24.00 fps)</div>
<div class="a" style="left:146px;top:780px;width:380px;height:26.500px;background:#141414;border:1px solid #202020;border-radius:4px"></div>
<!-- column header -->
<div class="a" style="left:3px;top:820px;width:763px;height:1px;background:#1c1c1c"></div>
<div class="a" style="left:3px;top:821px;width:763px;height:26px;background:#262626"></div>
<div class="t" style="left:153.500px;top:823.800px;font-size:13px">#</div>
<div class="t" style="left:199.500px;top:823.800px;font-size:13.500px;letter-spacing:-.400px">Source Name</div>
<div class="t" style="left:584px;top:823.500px;font-size:13.500px;letter-spacing:-.130px">Parent &amp; Link</div>
<!-- layer row -->
<div class="a" style="left:3px;top:847.500px;width:763px;height:23.500px;background:#484848"></div>
<div class="a" style="left:9px;top:850px;width:18.500px;height:18px;background:#3b3b3b"></div>
<div class="a" style="left:51.500px;top:850px;width:18.500px;height:18px;background:#3b3b3b"></div>
<div class="a" style="left:73px;top:850px;width:18.500px;height:18px;background:#3b3b3b"></div>
<div class="a" style="left:124.500px;top:851px;width:18px;height:17px;background:#a8d0cc"></div>
<div class="t" style="left:155px;top:850px;font-size:15.500px;font-weight:700;color:#d4d4d4">1</div>
<svg style="left:199.500px;top:851px" width="14.500" height="18" viewBox="0 0 16 20">
<path d="M0 0h10.500L16 5.500V20H0z" fill="#fff"/><path d="M10.500 0v5.500H16z" fill="#d8d8d8"/>
<rect x="2.800" y="6.500" width="10.400" height="9.500" rx="2" fill="#1b1b1b"/><circle cx="8" cy="11" r="3.600" fill="#3da0f0"/><circle cx="8" cy="11" r="1.700" fill="#9fd0ff"/>
<rect x="5.500" y="17.400" width="5" height=".8" fill="#999"/>
</svg>
<div class="a" style="left:219.500px;top:847.500px;width:159.500px;height:23.500px;background:#a0a0a0"></div>
<div class="t" style="left:223.500px;top:849.500px;font-size:16px;letter-spacing:.380px;color:#101010">hand-re...-light.mp4</div>
<div class="a" style="left:386px;top:849.500px;width:19px;height:18.500px;background:#3b3b3b"></div>
<div class="a" style="left:429.500px;top:849.500px;width:19px;height:18.500px;background:#3b3b3b"></div>
<div class="a" style="left:472px;top:849.500px;width:19px;height:18.500px;background:#3b3b3b"></div>
<div class="a" style="left:493.800px;top:849.500px;width:19px;height:18.500px;background:#3b3b3b"></div>
<div class="a" style="left:515.300px;top:849.500px;width:19px;height:18.500px;background:#3b3b3b"></div>
<div class="a" style="left:536.800px;top:849.500px;width:19px;height:18.500px;background:#3b3b3b"></div>
<div class="a" style="left:610px;top:849px;width:128.500px;height:21px;background:#1e1e1e;border-radius:2px"></div>
<div class="t" style="left:619px;top:847.500px;font-size:16.500px;letter-spacing:-.740px;color:#dadada">None</div>
<!-- scale row -->
<div class="a" style="left:3px;top:871px;width:763px;height:1px;background:#1f1f1f"></div>
<div class="a" style="left:3px;top:896px;width:763px;height:1px;background:#1f1f1f"></div>
<div class="a" style="left:385px;top:874px;width:19.500px;height:19.500px;background:#1e1e1e"></div>
<div class="t" style="left:202px;top:875.500px;font-size:15.500px;letter-spacing:-.560px;color:#c0c0c0">Scale</div>
<div class="t" style="left:411.500px;top:872.500px;font-size:15.500px;letter-spacing:-.070px;color:#2d8ceb">12,5<span style="color:#b6b6b6">,</span>22,5<span style="color:#b6b6b6">%</span></div>
<div class="a" style="left:405.500px;top:896.500px;width:72px;height:5px;background:#00ee00"></div>
<!-- bottom bar -->
<div class="a" style="left:3.100px;top:1198.100px;width:763px;height:1.600px;background:#101010"></div>
<div class="a" style="left:3.100px;top:1199.700px;width:763px;height:22.800px;background:#272727;border-radius:0 0 0 4px"></div>
<div class="a" style="left:9px;top:1200.500px;width:23.800px;height:21.500px;border:1px solid #323232;border-radius:2px"></div>
<div class="t" style="left:151.500px;top:1201px;font-size:15.500px;letter-spacing:-.040px">Frame Render Time</div>
<div class="t" style="left:297.500px;top:1201px;font-size:15.500px;font-weight:700;letter-spacing:-.160px;color:#3ecfae">22ms</div>
<div class="a" style="left:382.500px;top:1201px;width:191.500px;height:21px;background:#1e1e1e;border:1px solid #2c2c2c;border-radius:2px"></div>
<div class="t" style="left:391.500px;top:1201px;font-size:15.500px;letter-spacing:.090px">Toggle Switches / Modes</div>
<div class="a" style="left:766px;top:768px;width:2px;height:454.500px;background:#121212"></div>
<!--/TL-->
<!--TI-->
<svg style="left:0;top:730px" width="770" height="495" viewBox="0 730 770 495">
<defs>
</defs>
<!-- tab close -->
<path d="M537 746.500l6.500 6.500M543.500 746.500l-6.500 6.500" stroke="#b0b0b0" stroke-width="1.400"/>
<!-- search icon -->
<circle cx="165.600" cy="790.800" r="4.900" fill="none" stroke="#b4b4b4" stroke-width="1.600"/><path d="M162.200 794.500l-5.800 5.600" stroke="#b4b4b4" stroke-width="1.800" stroke-linecap="round"/><path d="M171.800 795.200h7.600l-3.800 3.800z" fill="#b4b4b4"/>
<!-- flowchart -->
<g fill="#b4b4b4"><path d="M548 788.600l3-1.900h5.500v3.800h-5.500z"/><rect x="564" y="786.500" width="6.300" height="4.200"/><rect x="564" y="794" width="6.300" height="4.200"/><path d="M566.300 800h6.500l-3.250 3.800z"/></g>
<path d="M556 788.600h8M560.500 788.600v7.500h4" fill="none" stroke="#b4b4b4" stroke-width="1.400"/>
<!-- shy big -->
<rect x="597.300" y="795" width="22.500" height="7.500" fill="#4a4a4a"/>
<path d="M600 793a8.600 8.300 0 0 1 17.200 0l1.300-1.600 1.300 1.600v2h-22.500v-2l1.300-1.600z" fill="#b4b4b4"/>
<circle cx="605.700" cy="789.500" r="1.700" fill="#272727"/><circle cx="611.500" cy="789.500" r="1.700" fill="#272727"/>
<path d="M606.500 792h4.200v6.800a2.100 2.100 0 0 1-4.200 0z" fill="#b4b4b4"/>
<!-- frame blend big -->
<rect x="636" y="788.300" width="13.500" height="15" fill="#b4b4b4"/>
<rect x="640.600" y="782.800" width="16.200" height="17.600" fill="#272727"/>
<rect x="641.500" y="783.700" width="14.400" height="15.800" fill="#b4b4b4"/>
<path d="M643.300 785v13.500M654.100 785v13.500" stroke="#272727" stroke-width="1.100" stroke-dasharray="1.400 1.400"/>
<path d="M637.800 790v12.500" stroke="#272727" stroke-width="1.100" stroke-dasharray="1.400 1.400"/>
<rect x="646" y="790.500" width="5.500" height="1.700" fill="#272727"/>
<!-- motion blur big -->
<g fill="#272727" stroke="#b4b4b4" stroke-width="1.500"><circle cx="679.500" cy="797" r="6.300"/><circle cx="682.800" cy="793.700" r="6.300"/><circle cx="686.200" cy="790.300" r="6.300" fill="#4a4a4a"/></g>
<!-- graph editor -->
<rect x="722" y="786" width="21" height="17" fill="none" stroke="#b4b4b4" stroke-width="1.600"/>
<path d="M729.500 782.500v3M734 784v2M738.500 782.500v3M719.800 790h2M719.800 795h2M719.800 800h2" stroke="#b4b4b4" stroke-width="1.400"/>
<path d="M725 790.500c7 0 5.500 9.500 14.500 9.500" fill="none" stroke="#b4b4b4" stroke-width="1.400"/>
<!-- header row icons -->
<svg x="11" y="830.200" width="15" height="9" viewBox="0 0 15 9" overflow="visible"><path d="M0 4.500C3.500-1.500 11.500-1.500 15 4.500 11.500 10.500 3.500 10.500 0 4.500z" fill="#c4c4c4"/><circle cx="7.500" cy="4.300" r="3.300" fill="#262626"/><circle cx="7.500" cy="4.300" r="1.900" fill="#c4c4c4"/><circle cx="8.600" cy="3.200" r="1.100" fill="#262626"/></svg>
<path d="M31.500 831.500h4l5-4.500v15l-5-4.500h-4z" fill="#b4b4b4"/><path d="M42.500 830.500a5.500 5.500 0 0 1 0 8M44.500 827.500a9 9 0 0 1 0 14" fill="none" stroke="#b4b4b4" stroke-width="1.500"/>
<circle cx="61" cy="834.500" r="4.900" fill="#b4b4b4"/>
<rect x="75.800" y="832" width="13" height="9.300" rx="1" fill="#b4b4b4"/><path d="M78.600 832v-2.200a3.700 3.700 0 0 1 7.400 0v2.200" fill="none" stroke="#b4b4b4" stroke-width="1.700"/><path d="M82.300 834.500a1.200 1.200 0 0 1 .8 2.100l.4 2.400h-2.400l.4-2.400a1.200 1.200 0 0 1 .8-2.100z" fill="#262626"/>
<g stroke="#121212" stroke-width="1.800"><path d="M99.500 828v13.500M145.500 828v13.500M192.600 828v13.500M379.200 828v13.500M576 828v13.500M744.300 828v13.500"/></g>
<path d="M120 827h8l9 8.500-7.500 7-9.500-9z" fill="#b4b4b4"/><circle cx="123.700" cy="830.800" r="1.600" fill="#262626"/>
<svg x="386.500" y="826.500" width="17" height="14" viewBox="0 0 17 14" overflow="visible"><path d="M2.500 7.500a6 6.300 0 0 1 12 0h1.500v1.600H1V7.500z" fill="#b8b8b8"/><circle cx="6.300" cy="5.300" r="1.500" fill="#262626"/><circle cx="10.700" cy="5.300" r="1.500" fill="#262626"/><path d="M7.300 7h2.400v5.300a1.200 1.200 0 0 1-2.400 0z" fill="#b8b8b8" stroke="#262626" stroke-width=".700"/><path d="M0 12.500h5M12 12.500h5" stroke="#b8b8b8" stroke-width="1.300"/></svg>
<circle cx="417" cy="834.300" r="2.700" fill="none" stroke="#b4b4b4" stroke-width="1.500"/><path d="M417 827.500v3M417 838.200v3M410.200 834.300h3M420.800 834.300h3M412.200 829.500l2.200 2.200M419.600 836.900l2.200 2.200M421.800 829.500l-2.200 2.200M414.400 836.900l-2.200 2.200" stroke="#b4b4b4" stroke-width="1.400"/>
<path d="M430.500 827.500l14 13.500" stroke="#b4b4b4" stroke-width="2" stroke-dasharray="2.300 1.300"/>
<text x="451.500" y="840" font-family="Liberation Serif,serif" font-style="italic" font-size="19" fill="#b4b4b4" textLength="15" lengthAdjust="spacingAndGlyphs">fx</text>
<rect x="472.300" y="829.500" width="12" height="11.500" fill="none" stroke="#b4b4b4" stroke-width="1.300"/><rect x="475" y="827" width="14.200" height="12" fill="#b4b4b4" stroke="#262626" stroke-width=".800"/><path d="M476.800 828v10M487.400 828v10" stroke="#262626" stroke-width="1" stroke-dasharray="1.200 1.200"/><rect x="479.500" y="832.200" width="5.200" height="1.500" fill="#262626"/>
<g fill="#262626" stroke="#b4b4b4" stroke-width="1.300"><circle cx="500" cy="836.800" r="5"/><circle cx="502.800" cy="834.200" r="5"/><circle cx="506" cy="831.500" r="5.600" fill="#5a5a5a"/></g>
<circle cx="524.300" cy="834.500" r="6.600" fill="none" stroke="#b4b4b4" stroke-width="1.600"/><path d="M529.500 829.500a7 7 0 0 1-10 10z" fill="#b4b4b4"/>
<path d="M545.800 828l6 3v7l-6 3-6-3v-7zM539.800 831l6 3 6-3M545.800 834v7" fill="none" stroke="#b4b4b4" stroke-width="1.500" stroke-linejoin="round"/>
<!-- layer row icons -->
<svg x="11" y="854.800" width="15" height="9" viewBox="0 0 15 9" overflow="visible"><path d="M0 4.500C3.500-1.500 11.500-1.500 15 4.500 11.500 10.500 3.500 10.500 0 4.500z" fill="#c4c4c4"/><circle cx="7.500" cy="4.300" r="3.300" fill="#262626"/><circle cx="7.500" cy="4.300" r="1.900" fill="#c4c4c4"/><circle cx="8.600" cy="3.200" r="1.100" fill="#262626"/></svg>
<path d="M109 858l5 4.800 5-4.800" fill="none" stroke="#c0c0c0" stroke-width="1.600"/>
<svg x="387" y="851.500" width="17" height="14" viewBox="0 0 17 14" overflow="visible"><path d="M2.500 7.500a6 6.300 0 0 1 12 0h1.500v1.600H1V7.500z" fill="#b8b8b8"/><circle cx="6.300" cy="5.300" r="1.500" fill="#262626"/><circle cx="10.700" cy="5.300" r="1.500" fill="#262626"/><path d="M7.300 7h2.400v5.300a1.200 1.200 0 0 1-2.400 0z" fill="#b8b8b8" stroke="#262626" stroke-width=".700"/><path d="M0 12.500h5M12 12.500h5" stroke="#b8b8b8" stroke-width="1.300"/></svg>
<path d="M432 866l13.500-13.500" stroke="#c4c4c4" stroke-width="1.800"/>
<svg x="581.300" y="849.800" width="21.600" height="19.200" viewBox="0 0 18 16" overflow="visible"><path d="M9.9 9.8L9.5 10.0L8.9 10.1L8.3 10.1L7.7 9.9L7.2 9.6L6.7 9.1L6.4 8.4L6.3 7.7L6.5 7.0L6.9 6.2L7.5 5.6L8.3 5.1L9.2 4.8L10.3 4.8L11.3 5.0L12.3 5.5L13.2 6.3L13.8 7.2L14.1 8.4L14.1 9.5L13.7 10.7L12.9 11.8L11.9 12.7L10.5 13.3L9.0 13.5L7.5 13.4L6.0 12.9L4.6 12.1L3.5 10.9L2.8 9.4L2.6 7.8L2.8 6.2L3.5 4.6L4.7 3.3L6.2 2.2L8.1 1.5L10.1 1.3L12.2 1.6L14.1 2.4L15.8 3.7" fill="none" stroke="#b0b0b0" stroke-width="1.500" stroke-linecap="round"/></svg>
<path d="M720 856l5.200 5 5.200-5" fill="none" stroke="#c8c8c8" stroke-width="1.700"/>
<!-- scale row -->
<circle cx="184.200" cy="884.800" r="6.800" fill="none" stroke="#b4b4b4" stroke-width="1.600"/><path d="M182 875.300h4.500M184.200 875.500v2.500M189.500 878l1.500-1.500" stroke="#b4b4b4" stroke-width="1.600"/>
<svg x="599.600" y="873.800" width="21.600" height="19.200" viewBox="0 0 18 16" overflow="visible"><path d="M9.9 9.8L9.5 10.0L8.9 10.1L8.3 10.1L7.7 9.9L7.2 9.6L6.7 9.1L6.4 8.4L6.3 7.7L6.5 7.0L6.9 6.2L7.5 5.6L8.3 5.1L9.2 4.8L10.3 4.8L11.3 5.0L12.3 5.5L13.2 6.3L13.8 7.2L14.1 8.4L14.1 9.5L13.7 10.7L12.9 11.8L11.9 12.7L10.5 13.3L9.0 13.5L7.5 13.4L6.0 12.9L4.6 12.1L3.5 10.9L2.8 9.4L2.6 7.8L2.8 6.2L3.5 4.6L4.7 3.3L6.2 2.2L8.1 1.5L10.1 1.3L12.2 1.6L14.1 2.4L15.8 3.7" fill="none" stroke="#b0b0b0" stroke-width="1.500" stroke-linecap="round"/></svg>
<!-- bottom icons -->
<g fill="#272727" stroke="#2d8ceb" stroke-width="1.700"><rect x="13.600" y="1204.300" width="9" height="9" rx="1.500"/><rect x="16.700" y="1207.600" width="9" height="9" rx="1.500"/><rect x="19.700" y="1210.900" width="8.500" height="8.500" rx="1.200" fill="#1c1c1c"/><circle cx="23.900" cy="1215.100" r="1.400" fill="#2d8ceb" stroke="none"/></g>
<g fill="none" stroke="#b4b4b4" stroke-width="1.600"><circle cx="45.500" cy="1209.500" r="5.500"/><rect x="46.500" y="1210.500" width="8.500" height="8.500" fill="#262626"/></g>
<path d="M72.500 1203c-2.500 0-3 1-3 3v2.500c0 1.500-.8 2.300-2 2.500 1.200.2 2 1 2 2.500v2.500c0 2 .5 3 3 3M77.500 1203c2.500 0 3 1 3 3v2.500c0 1.500.8 2.300 2 2.500-1.200.2-2 1-2 2.500v2.500c0 2-.5 3-3 3" fill="none" stroke="#b4b4b4" stroke-width="2"/>
<g fill="#b4b4b4"><circle cx="100.300" cy="1210.600" r="5.600"/><path d="M93.500 1216.200h14.500c1.500 0 2.500-1.500 2.500-3l-2-.3c0 1.300-.8 1.800-2 1.800h-13z"/><circle cx="108.300" cy="1205.800" r="1.100"/><circle cx="111.300" cy="1206.600" r="1.100"/></g><path d="M106.800 1213.500l1.500-7.500M108 1213.500l3.300-6.800" stroke="#b4b4b4" stroke-width="1.100"/>
</svg>
<!--/TI-->
<!--TR-->
<!-- time navigator -->
<div class="a" style="left:767px;top:777px;width:1205.500px;height:13.500px;background:#101010;border-radius:7px 7px 7px 7px"></div>
<div class="a" style="left:777.500px;top:778px;width:1185px;height:11.500px;background:#696969"></div>
<div class="a" style="left:767.500px;top:778px;width:10px;height:11.500px;background:#2d8ceb;border-radius:6px 0 0 6px"></div>
<div class="a" style="left:1962.500px;top:778px;width:9.500px;height:11.500px;background:#2d8ceb;border-radius:0 6px 6px 0"></div>
<div class="a" style="left:777.800px;top:778.500px;width:1.500px;height:10.500px;background:#2d8ceb"></div>
<!-- ruler -->
<div class="a" style="left:768px;top:790px;width:1204px;height:28.500px;background:#262626"></div>
<div class="a" style="left:768px;top:818.500px;width:1204px;height:1.500px;background:#0e0e0e"></div>
<div class="a" style="left:768px;top:790px;width:40px;height:24px;overflow:hidden"><div class="t" style="left:-10px;top:-.500px;font-size:14.500px;letter-spacing:.030px;color:#a8a8a8">00:00f</div></div>
<div class="a" style="left:888.8px;top:811.5px;width:1.500px;height:7px;background:#9a9a9a"></div>
<div class="t" style="left:868.2px;top:789.500px;font-size:14.500px;letter-spacing:.030px;color:#a8a8a8">00:12f</div>
<div class="a" style="left:999.8px;top:808.0px;width:1.500px;height:10.5px;background:#9a9a9a"></div>
<div class="t" style="left:979.3px;top:789.500px;font-size:14.500px;letter-spacing:.030px;color:#a8a8a8">01:00f</div>
<div class="a" style="left:1110.8px;top:811.5px;width:1.500px;height:7px;background:#9a9a9a"></div>
<div class="t" style="left:1090.3px;top:789.500px;font-size:14.500px;letter-spacing:.030px;color:#a8a8a8">01:12f</div>
<div class="a" style="left:1221.9px;top:808.0px;width:1.500px;height:10.5px;background:#9a9a9a"></div>
<div class="t" style="left:1201.4px;top:789.500px;font-size:14.500px;letter-spacing:.030px;color:#a8a8a8">02:00f</div>
<div class="a" style="left:1333.0px;top:811.5px;width:1.500px;height:7px;background:#9a9a9a"></div>
<div class="t" style="left:1312.4px;top:789.500px;font-size:14.500px;letter-spacing:.030px;color:#a8a8a8">02:12f</div>
<div class="a" style="left:1444.0px;top:808.0px;width:1.500px;height:10.5px;background:#9a9a9a"></div>
<div class="t" style="left:1423.5px;top:789.500px;font-size:14.500px;letter-spacing:.030px;color:#a8a8a8">03:00f</div>
<div class="a" style="left:1555.1px;top:811.5px;width:1.500px;height:7px;background:#9a9a9a"></div>
<div class="t" style="left:1534.5px;top:789.500px;font-size:14.500px;letter-spacing:.030px;color:#a8a8a8">03:12f</div>
<div class="a" style="left:1666.1px;top:808.0px;width:1.500px;height:10.5px;background:#9a9a9a"></div>
<div class="t" style="left:1645.5px;top:789.500px;font-size:14.500px;letter-spacing:.030px;color:#a8a8a8">04:00f</div>
<div class="a" style="left:1777.2px;top:811.5px;width:1.500px;height:7px;background:#9a9a9a"></div>
<div class="t" style="left:1756.6px;top:789.500px;font-size:14.500px;letter-spacing:.030px;color:#a8a8a8">04:12f</div>
<div class="a" style="left:1888.2px;top:808.0px;width:1.500px;height:10.5px;background:#9a9a9a"></div>
<div class="t" style="left:1867.7px;top:789.500px;font-size:14.500px;letter-spacing:.030px;color:#a8a8a8">05:00f</div>

<!-- work area -->
<div class="a" style="left:768px;top:820px;width:1204px;height:22px;background:#111"></div>
<div class="a" style="left:776.500px;top:819.800px;width:1186px;height:20.900px;background:#646464"></div>
<div class="a" style="left:769px;top:820px;width:7.500px;height:20.500px;background:#2d8ceb;border-radius:5px 0 0 5px"></div>
<div class="a" style="left:1962.500px;top:820px;width:8.500px;height:20.500px;background:#2d8ceb;border-radius:0 5px 5px 0"></div>
<!-- tracks -->
<div class="a" style="left:768px;top:842px;width:11px;height:355px;background:#2a2a2a"></div>
<div class="a" style="left:779px;top:842px;width:1183px;height:355px;background:#353535"></div>
<div class="a" style="left:1962px;top:842px;width:10px;height:355px;background:#2f2f2f"></div>
<div class="a" style="left:768px;top:842px;width:1204px;height:5.500px;background:#2c2c2c"></div>
<div class="a" style="left:768px;top:847.500px;width:11px;height:23.500px;background:#424242"></div>
<div class="a" style="left:1962px;top:847.500px;width:10px;height:23.500px;background:#454545"></div>
<div class="a" style="left:778.500px;top:842.500px;width:8.500px;height:4px;background:#1fb023"></div>
<div class="a" style="left:779px;top:848px;width:1183px;height:22.500px;background:linear-gradient(#a9cfca,#9dc4bf 50%,#8fb6b2);border-radius:6px 0 0 0;box-shadow:-1px -1px 0 #0a0a0a inset 0 0 0 #000"></div>
<div class="a" style="left:768px;top:871px;width:1204px;height:1px;background:#2a2a2a"></div>
<div class="a" style="left:768px;top:896px;width:1204px;height:1px;background:#2a2a2a"></div>
<!-- bottom -->
<div class="a" style="left:768px;top:1197px;width:1227.800px;height:25.500px;background:#222;border-radius:0 0 4px 0"></div>
<div class="a" style="left:1972px;top:770px;width:1px;height:427px;background:#242424"></div>
<!-- playhead -->
<div class="a" style="left:777.800px;top:812px;width:1.600px;height:386px;background:#2d8ceb"></div>
<svg style="left:760px;top:770px" width="1240" height="460" viewBox="760 770 1240 460">
<path d="M770 797.500h17v9.500l-8.500 10-8.500-10z" fill="#2d8ceb"/>
<path d="M778.500 804v13" stroke="#8cc4ff" stroke-width="1"/>
<path d="M1953 849.500h8.500v8.500z" fill="#0c0c0c"/>
<path d="M779 848v7c0-4.500 2.500-7 6.500-7z" fill="#0c0c0c"/>
<!-- I-beam -->
<path d="M773.500 877.500h10.500M773.500 892h10.500" fill="none" stroke="#c4c4c4" stroke-width="1.800"/><path d="M778.700 877.500v14.500" stroke="#c4c4c4" stroke-width="3"/>
<!-- marker bin -->
<path d="M1977 823h16v11.500l-8 7.500-8-7.500z" fill="#a8a8a8"/>
<path d="M1983 860.500l8-9.500v5h2.500v8.500h-5" fill="#a8a8a8"/><path d="M1977.500 862.500l10.500-11" stroke="#a8a8a8" stroke-width="1.500"/><circle cx="1982.500" cy="864.500" r="3.600" fill="#272727" stroke="#a8a8a8" stroke-width="1.500"/><path d="M1976 863h4" stroke="#a8a8a8" stroke-width="1.500"/>
<!-- zoom slider -->
<path d="M775 1213.500l7-6 7 6z" fill="#b4b4b4"/>
<path d="M817 1211.500h56" stroke="#444" stroke-width="2"/>
<circle cx="811.500" cy="1212.500" r="4.800" fill="#262626" stroke="#b4b4b4" stroke-width="2"/>
<path d="M891 1216l8-9.500 4 4.500 3.500-4 7.500 9z" fill="#b4b4b4"/>
</svg>
<!--/TR-->
</body>
</html>
